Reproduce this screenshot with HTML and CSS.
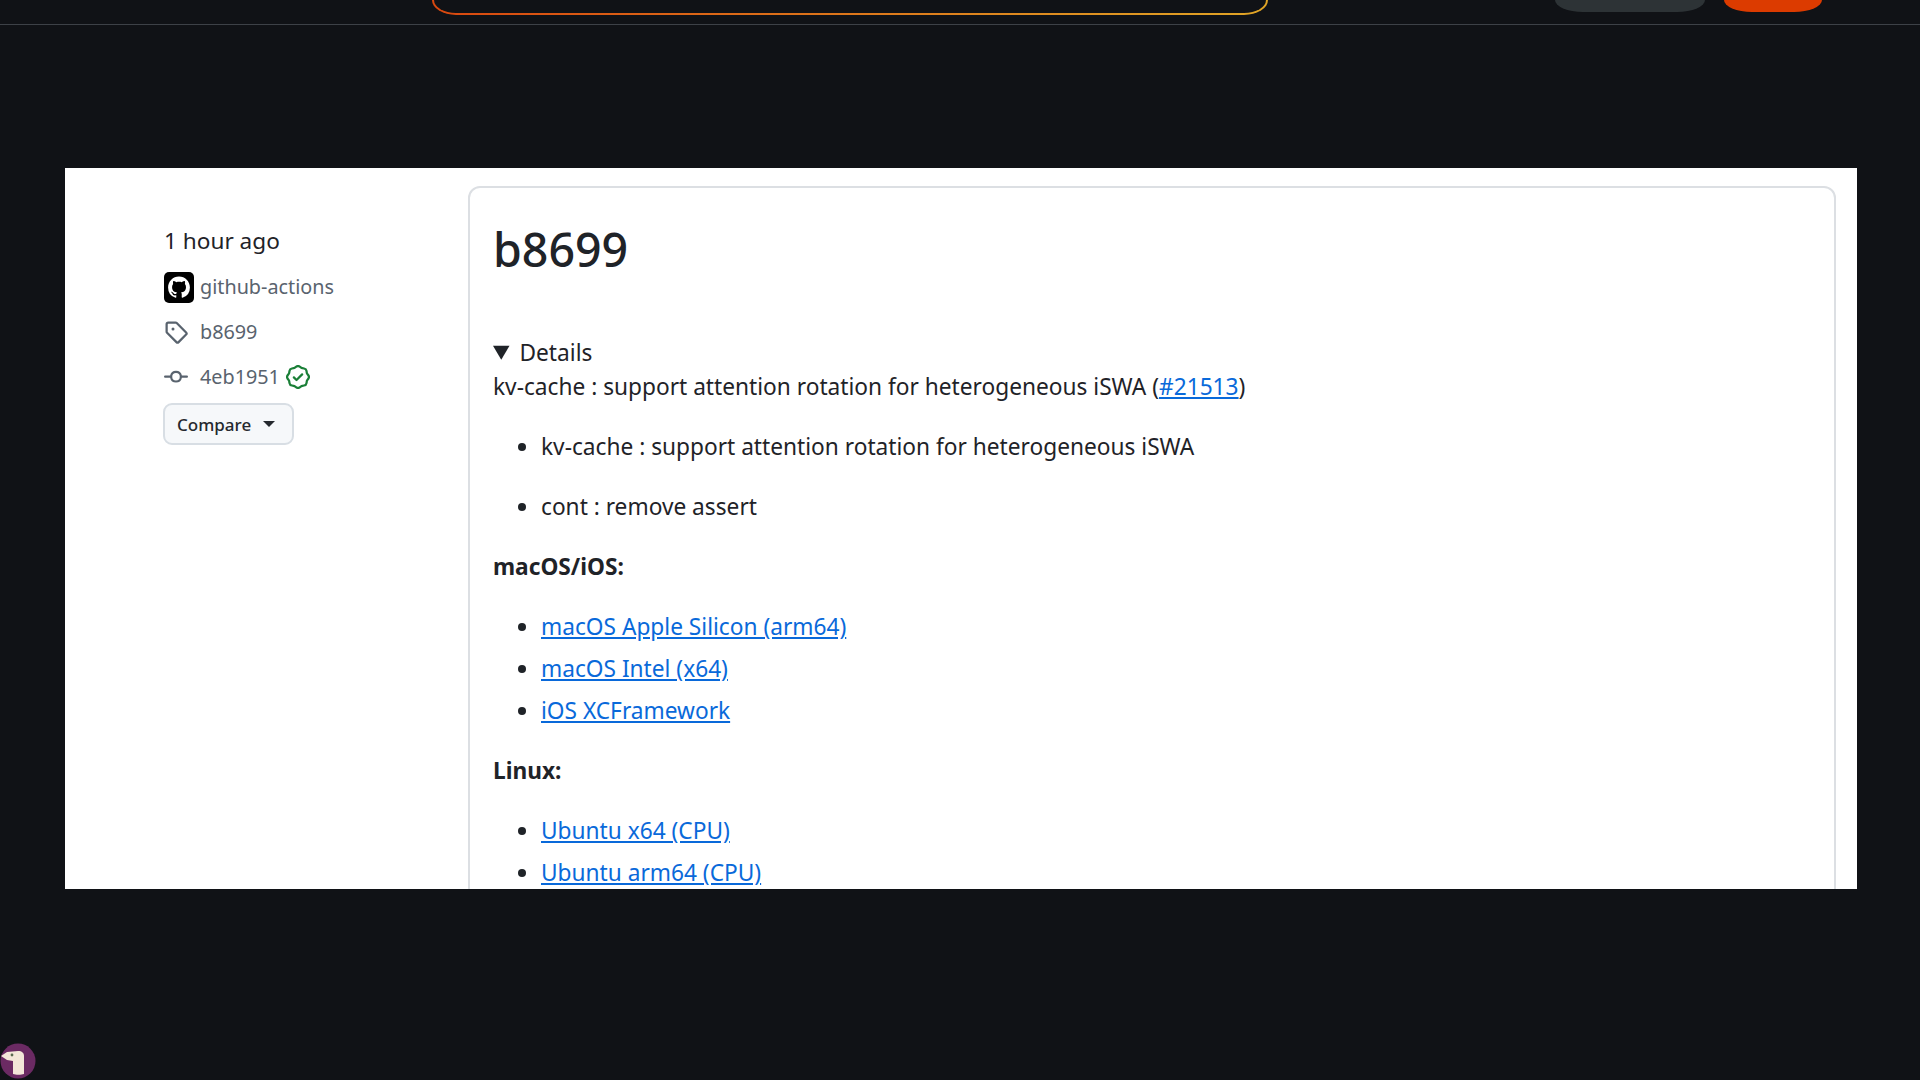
FILE: index.html
```html
<!DOCTYPE html>
<html lang="en">
<head>
    <meta charset="UTF-8">
    <title>Release b8699</title>
    <link rel="stylesheet" href="styles.css">
</head>
<body>
    <header class="topbar">
        <div class="search-box"></div>
        <div class="topbar-actions">
            <div class="btn-grey"></div>
            <div class="btn-orange"></div>
        </div>
    </header>

    <main class="panel">
        <aside class="sidebar">
            <div class="time">1 hour ago</div>
            <div class="meta-row meta-author">
                <svg class="avatar" viewBox="-3 -3 22 22"><path fill="#fff" d="M8 0c4.42 0 8 3.58 8 8a8.013 8.013 0 0 1-5.45 7.59c-.4.08-.55-.17-.55-.38 0-.27.01-1.13.01-2.2 0-.75-.25-1.23-.54-1.48 1.78-.2 3.65-.88 3.65-3.95 0-.88-.31-1.59-.82-2.15.08-.2.36-1.02-.08-2.12 0 0-.67-.22-2.2.82-.64-.18-1.32-.27-2-.27-.68 0-1.36.09-2 .27-1.53-1.03-2.2-.82-2.2-.82-.44 1.1-.16 1.92-.08 2.12-.51.56-.82 1.27-.82 2.15 0 3.06 1.86 3.75 3.64 3.95-.23.2-.44.55-.51 1.07-.46.21-1.61.55-2.33-.66-.15-.24-.6-.83-1.23-.82-.67.01-.27.38.01.53.34.19.73.9.82 1.13.16.45.68 1.31 2.69.94 0 .67.01 1.3.01 1.49 0 .21-.15.45-.55.38A7.995 7.995 0 0 1 0 8c0-4.42 3.58-8 8-8Z"></path></svg>
                <span>github-actions</span>
            </div>
            <div class="meta-row">
                <svg class="icon" viewBox="0 0 16 16"><path d="M1 7.775V2.75C1 1.784 1.784 1 2.75 1h5.025c.464 0 .91.184 1.238.513l6.25 6.25a1.75 1.75 0 0 1 0 2.474l-5.026 5.026a1.75 1.75 0 0 1-2.474 0l-6.25-6.25A1.752 1.752 0 0 1 1 7.775Zm1.5 0c0 .066.026.13.073.177l6.25 6.25a.25.25 0 0 0 .354 0l5.025-5.025a.25.25 0 0 0 0-.354l-6.25-6.25a.25.25 0 0 0-.177-.073H2.75a.25.25 0 0 0-.25.25ZM6 5a1 1 0 1 1 0 2 1 1 0 0 1 0-2Z"></path></svg>
                <span>b8699</span>
            </div>
            <div class="meta-row">
                <svg class="icon" viewBox="0 0 16 16"><path d="M11.93 8.5a4.002 4.002 0 0 1-7.86 0H.75a.75.75 0 0 1 0-1.5h3.32a4.002 4.002 0 0 1 7.86 0h3.32a.75.75 0 0 1 0 1.5Zm-1.43-.75a2.5 2.5 0 1 0-5 0 2.5 2.5 0 0 0 5 0Z"></path></svg>
                <span>4eb1951</span>
                <svg class="verified" viewBox="0 0 16 16"><path d="m9.585.52.929.68c.153.112.331.186.518.215l1.138.175a2.678 2.678 0 0 1 2.24 2.24l.174 1.139c.029.187.103.365.215.518l.68.928a2.677 2.677 0 0 1 0 3.17l-.68.928a1.174 1.174 0 0 0-.215.518l-.175 1.138a2.678 2.678 0 0 1-2.241 2.241l-1.138.175a1.17 1.17 0 0 0-.518.215l-.928.68a2.677 2.677 0 0 1-3.17 0l-.928-.68a1.174 1.174 0 0 0-.518-.215L3.83 14.41a2.678 2.678 0 0 1-2.24-2.24l-.175-1.138a1.17 1.17 0 0 0-.215-.518l-.68-.928a2.677 2.677 0 0 1 0-3.17l.68-.928c.112-.153.186-.331.215-.518l.175-1.14a2.678 2.678 0 0 1 2.24-2.24l1.139-.175c.187-.029.365-.103.518-.215l.928-.68a2.677 2.677 0 0 1 3.17 0ZM7.303 1.728l-.927.68a2.67 2.67 0 0 1-1.18.489l-1.137.174a1.179 1.179 0 0 0-.987.987l-.174 1.136a2.677 2.677 0 0 1-.489 1.18l-.68.928a1.18 1.18 0 0 0 0 1.394l.68.927c.256.348.424.753.489 1.18l.174 1.137c.078.509.478.909.987.987l1.136.174a2.67 2.67 0 0 1 1.18.489l.928.68c.414.305.979.305 1.394 0l.927-.68a2.67 2.67 0 0 1 1.18-.489l1.137-.174a1.18 1.18 0 0 0 .987-.987l.174-1.136a2.67 2.67 0 0 1 .489-1.18l.68-.928a1.176 1.176 0 0 0 0-1.394l-.68-.927a2.686 2.686 0 0 1-.489-1.18l-.174-1.137a1.179 1.179 0 0 0-.987-.987l-1.136-.174a2.677 2.677 0 0 1-1.18-.489l-.928-.68a1.176 1.176 0 0 0-1.394 0ZM11.28 6.78l-3.75 3.75a.75.75 0 0 1-1.06 0L4.72 8.78a.751.751 0 0 1 .018-1.042.751.751 0 0 1 1.042-.018l1.22 1.22 3.22-3.22a.751.751 0 0 1 1.042.018.751.751 0 0 1 .018 1.042Z"></path></svg>
            </div>
            <button class="compare-btn">Compare <span class="caret"></span></button>
        </aside>

        <section class="release-card">
            <h1>b8699</h1>
            <details open>
                <summary>Details</summary>
                <p>kv-cache : support attention rotation for heterogeneous iSWA (<a href="#">#21513</a>)</p>
                <ul class="loose">
                    <li><p>kv-cache : support attention rotation for heterogeneous iSWA</p></li>
                    <li><p>cont : remove assert</p></li>
                </ul>
                <p><strong>macOS/iOS:</strong></p>
                <ul>
                    <li><a href="#">macOS Apple Silicon (arm64)</a></li>
                    <li><a href="#">macOS Intel (x64)</a></li>
                    <li><a href="#">iOS XCFramework</a></li>
                </ul>
                <p><strong>Linux:</strong></p>
                <ul>
                    <li><a href="#">Ubuntu x64 (CPU)</a></li>
                    <li><a href="#">Ubuntu arm64 (CPU)</a></li>
                </ul>
            </details>
        </section>
    </main>

    <div class="corner-badge">
        <svg viewBox="0 0 36 36">
            <circle cx="18" cy="18" r="17.5" fill="#6b2a63"></circle>
            <path fill="#f3e6d8" d="M1 13l6-4 11-1c4 0 6 2 6 5v18c-3 1-8 1-11 0V18l-6-1z"></path>
            <circle cx="12" cy="12" r="1.4" fill="#5a6a50"></circle>
        </svg>
    </div>
</body>
</html>
```

FILE: styles.css
```css
* {
    box-sizing: border-box;
}

html, body {
    margin: 0;
    height: 100%;
    overflow: hidden;
}

body {
    background-color: #101216;
    font-family: "Noto Sans", "Liberation Sans", sans-serif;
    color: #1f2328;
}

.topbar {
    height: 25px;
    border-bottom: 1px solid #3d4147;
    display: flex;
    justify-content: space-between;
    align-items: flex-start;
    padding: 0 98px 0 432px;
}

.search-box {
    width: 836px;
    height: 15px;
    border: 2px solid transparent;
    border-top: none;
    border-radius: 0 0 24px 24px / 0 0 15px 15px;
    background: linear-gradient(#101216, #101216) padding-box, linear-gradient(to right, #d9480f, #e0a526) border-box;
}

.topbar-actions {
    display: flex;
    gap: 19px;
}

.btn-grey {
    width: 150px;
    height: 12px;
    background-color: #2d3336;
    border-radius: 0 0 28px 28px / 0 0 12px 12px;
}

.btn-orange {
    width: 98px;
    height: 12px;
    background-color: #dc3b00;
    border-radius: 0 0 28px 28px / 0 0 12px 12px;
}

.panel {
    margin: 143px 63px 0 65px;
    height: 721px;
    background-color: #fff;
    display: flex;
    overflow: hidden;
}

.sidebar {
    width: 403px;
    flex-shrink: 0;
    padding: 52px 0 0 99px;
}

.time {
    font-size: 22.6px;
    line-height: 42px;
    margin-bottom: 2px;
}

.meta-row {
    display: flex;
    align-items: center;
    height: 45px;
    font-size: 19.8px;
    color: #59636e;
}

.avatar {
    width: 30px;
    height: 31px;
    margin-top: 2px;
    background-color: #000;
    border-radius: 5px;
    margin-right: 6px;
}

.icon {
    width: 24px;
    height: 24px;
    fill: #59636e;
    margin-right: 12px;
}

.verified {
    width: 24px;
    height: 24px;
    fill: #1a7f37;
    margin-left: 6px;
}

.compare-btn {
    display: flex;
    align-items: center;
    width: 131px;
    height: 42px;
    margin: 4px 0 0 -1px;
    padding: 0 17px 0 12px;
    justify-content: space-between;
    background-color: #f6f8fa;
    border: 2px solid #d8dee4;
    border-radius: 9px;
    font-family: inherit;
    font-size: 17px;
    font-weight: 500;
    color: #25292e;
}

.caret {
    border-top: 6px solid #25292e;
    border-left: 6px solid transparent;
    border-right: 6px solid transparent;
}

.release-card {
    width: 1368px;
    height: 800px;
    flex-shrink: 0;
    margin-top: 18px;
    padding: 31px 23px;
    border: 2px solid #dcdfe3;
    border-radius: 12px;
    font-size: 22.7px;
    line-height: 36px;
}

h1 {
    margin: 0 0 54px;
    font-size: 46.5px;
    line-height: 60px;
    font-weight: 500;
}

summary {
    height: 36px;
    cursor: pointer;
}

summary::marker {
    font-size: 25px;
}

p {
    margin: 0 0 24px;
}

ul {
    margin: 0 0 24px;
    padding-left: 48px;
}

li + li {
    margin-top: 6px;
}

.loose li + li {
    margin-top: 24px;
}

a {
    color: #0969da;
}

.corner-badge {
    position: fixed;
    left: 0;
    bottom: 1px;
    width: 36px;
    height: 36px;
}
```
